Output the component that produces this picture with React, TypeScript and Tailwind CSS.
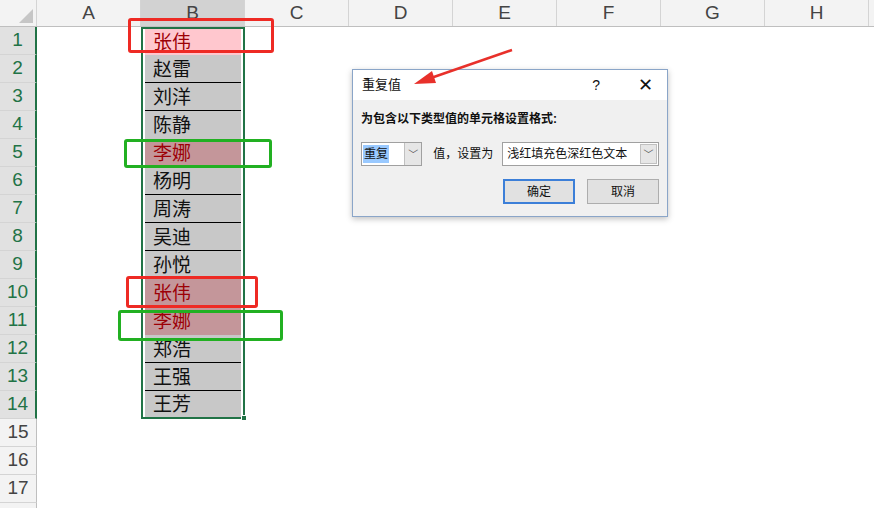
import React from "react";

const cols = ["A", "B", "C", "D", "E", "F", "G", "H"];
const names = ["张伟","赵雷","刘洋","陈静","李娜","杨明","周涛","吴迪","孙悦","张伟","李娜","郑浩","王强","王芳"];
const font = { fontFamily: '"Liberation Sans","Noto Sans CJK SC",sans-serif' };

export default function App() {
  const rows = Array.from({ length: 18 }, (_, i) => i + 1);
  return (
    <div className="relative w-[874px] h-[508px] overflow-hidden bg-white" style={font}>
      <div className="flex h-[27px] bg-[#f3f3f3] border-b border-[#bfbfbf]">
        <div className="w-[37px] shrink-0 border-r border-[#d4d4d4] relative">
          <div className="absolute right-[3px] bottom-[3px] w-0 h-0 border-l-[14px] border-l-transparent border-b-[14px] border-b-[#c6c6c6]" />
        </div>
        {cols.map((c) => (
          <div key={c} className={`w-[104px] shrink-0 flex items-center justify-center text-[19px] text-[#444] border-r border-[#d4d4d4] ${c === "B" ? "bg-[#d2d2d2]" : ""}`}>{c}</div>
        ))}
      </div>
      {rows.map((r) => {
        const name = names[r - 1];
        const sel = r <= 14;
        let bg = "";
        let color = "text-[#111]";
        if (sel) bg = "bg-[#c8c8c8]";
        if (r === 1) { bg = "bg-[#ffc7ce]"; color = "text-[#9c0006]"; }
        if (r === 5 || r === 10 || r === 11) { bg = "bg-[#c4969a]"; color = "text-[#9c0006]"; }
        const line = sel && r >= 2 && r <= 13 && r !== 4 && r !== 9 && r !== 10 && r !== 11 ? "border-b border-black" : "";
        return (
          <div key={r} className="flex h-[28px]">
            <div className={`w-[37px] shrink-0 flex items-center justify-center text-[19px] text-[#444] border-b border-[#d4d4d4] ${sel ? "bg-[#e1e1e1] border-r-2 border-r-[#217346] text-[#217346]" : "bg-[#f3f3f3] border-r border-r-[#bfbfbf]"}`}>{r}</div>
            <div className="w-[104px] shrink-0" />
            <div className={`w-[104px] shrink-0 ${sel ? "border-x-2 border-[#217346] px-[2px]" : ""} ${r === 14 ? "border-b-2 border-b-[#217346]" : ""} ${r === 1 ? "border-t-2 border-t-[#217346]" : ""}`}>
              {sel && (
                <div className={`h-full ${bg} ${line} flex items-center pl-[8px] pt-[3px] text-[19px] ${color}`}>{name}</div>
              )}
            </div>
          </div>
        );
      })}
      <div className="absolute left-[241px] top-[415px] w-[6px] h-[6px] bg-[#217346] border border-white" />
      <div className="absolute left-[128px] top-[18px] w-[146px] h-[35px] border-[3px] border-[#ee2a24] rounded-[3px]" />
      <div className="absolute left-[124px] top-[139px] w-[148px] h-[29px] border-[3px] border-[#22b022] rounded-[3px]" />
      <div className="absolute left-[126px] top-[276px] w-[132px] h-[32px] border-[3px] border-[#ee2a24] rounded-[3px]" />
      <div className="absolute left-[118px] top-[310px] w-[165px] h-[31px] border-[3px] border-[#22b022] rounded-[3px]" />
      <div className="absolute left-[352px] top-[69px] w-[316px] h-[148px] border border-[#8aa5c8] bg-[#f0f0f0] shadow-[0_2px_6px_rgba(0,0,0,0.25)] text-[12px] text-[#111]">
        <div className="h-[30px] bg-white flex items-center pl-[9px]">
          <span className="text-[13px]">重复值</span>
          <span className="ml-auto mr-[38px] text-[14px]">?</span>
          <span className="mr-[14px] text-[18px] leading-none font-light">✕</span>
        </div>
        <div className="px-[8px] pt-[10px] font-bold text-[12px]">为包含以下类型值的单元格设置格式:</div>
        <div className="flex items-center px-[8px] mt-[14px]">
          <div className="flex h-[24px] w-[62px] border border-[#a0a0a0] bg-white">
            <div className="flex-1 flex items-center pl-[1px]"><span className="bg-[#99c9ff] px-[1px]">重复</span></div>
            <div className="w-[17px] border-l border-[#c0c0c0] bg-[#e6e6e6] flex items-center justify-center text-[10px] text-[#555]">﹀</div>
          </div>
          <span className="whitespace-nowrap ml-[11px] mr-[9px]">值，设置为</span>
          <div className="flex h-[24px] w-[159px] border border-[#a0a0a0] bg-white">
            <div className="flex-1 flex items-center pl-[4px] whitespace-nowrap">浅红填充色深红色文本</div>
            <div className="w-[17px] m-[1px] border border-[#c0c0c0] bg-[#e6e6e6] flex items-center justify-center text-[10px] text-[#555]">﹀</div>
          </div>
        </div>
        <div className="flex justify-end gap-[12px] pr-[8px] mt-[13px]">
          <div className="w-[72px] h-[25px] border-2 border-[#3c7fd8] bg-[#e1e1e1] flex items-center justify-center">确定</div>
          <div className="w-[72px] h-[25px] border border-[#adadad] bg-[#e1e1e1] flex items-center justify-center">取消</div>
        </div>
      </div>
      <svg className="absolute left-0 top-0 pointer-events-none" width="874" height="508">
        <line x1="512" y1="50" x2="428" y2="79" stroke="#e8302a" strokeWidth="2.5" />
        <polygon points="414,84 432,71 436,83" fill="#e8302a" />
      </svg>
    </div>
  );
}
